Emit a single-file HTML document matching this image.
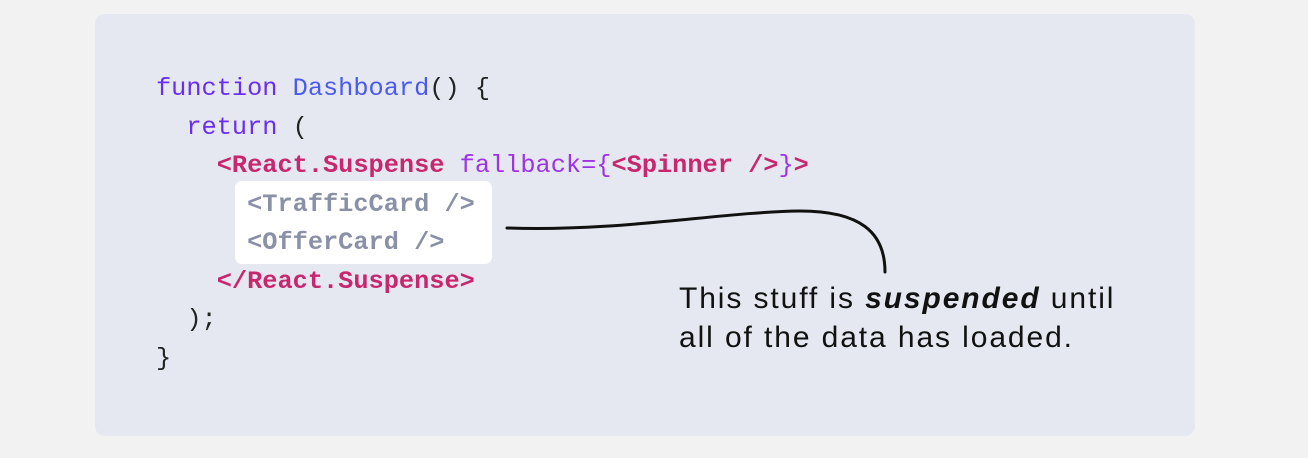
<!DOCTYPE html>
<html><head><style>
body{margin:0;width:1308px;height:458px;background:#f2f2f2;position:relative;overflow:hidden}
.panel{position:absolute;left:95px;top:14px;width:1100px;height:422px;background:#e5e8f0;border-radius:10px}
.wb{position:absolute;left:235px;top:181px;width:257px;height:83px;background:#fff;border-radius:7px}
pre{position:absolute;left:156px;top:70px;margin:0;font-family:"Liberation Mono","DejaVu Sans Mono",monospace;font-size:25.3px;line-height:38.5px;color:#222}
.k{color:#6a2ef0}.f{color:#4a5af0}.t{color:#c8266e;font-weight:bold}.a{color:#9d32e6}.g{color:#8a90a6;font-weight:bold}
.note{position:absolute;left:679px;top:279px;font-family:"Liberation Sans",sans-serif;font-size:30px;letter-spacing:1.9px;line-height:39px;color:#111}
</style></head><body>
<div class="panel"></div>
<div class="wb"></div>
<pre><span class="k">function</span> <span class="f">Dashboard</span>() {
  <span class="k">return</span> (
    <span class="t">&lt;React.Suspense</span> <span class="a">fallback={</span><span class="t">&lt;Spinner /&gt;</span><span class="a">}</span><span class="t">&gt;</span>
      <span class="g">&lt;TrafficCard /&gt;</span>
      <span class="g">&lt;OfferCard /&gt;</span>
    <span class="t">&lt;/React.Suspense&gt;</span>
  );
}</pre>
<svg style="position:absolute;left:0;top:0" width="1308" height="458"><path d="M507 228 C620 232 720 212 800 211 C860 211 885 232 885 272" fill="none" stroke="#111" stroke-width="3" stroke-linecap="round"/></svg>
<div class="note">This stuff is <b><i>suspended</i></b> until<br>all of the data has loaded.</div>
</body></html>
